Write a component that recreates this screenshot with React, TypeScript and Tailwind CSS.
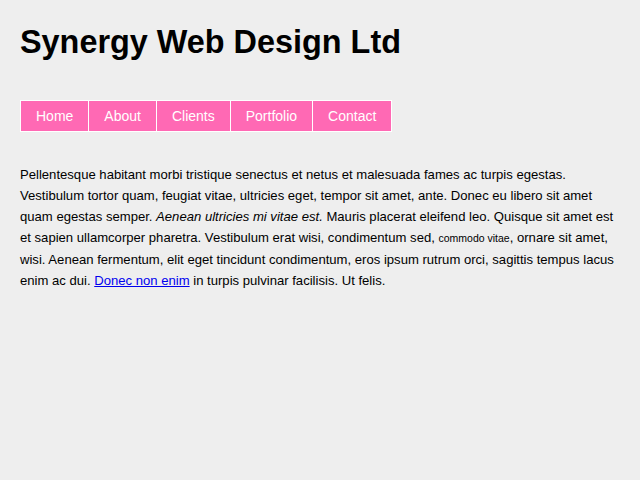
export default function App() {
    const links = ["Home", "About", "Clients", "Portfolio", "Contact"];

    return (
        <div className="min-h-[480px] bg-[#eeeeee] px-5 pt-6 font-['Liberation_Sans',Arial,sans-serif] text-black">
            <h1 className="text-[32.4px] font-bold leading-[36px]">Synergy Web Design Ltd</h1>

            <ul className="mt-10 flex w-fit border-y border-l border-white">
                {links.map((link) => (
                    <li key={link} className="border-r border-white bg-[#ff69b4]">
                        <a href="#" className="block px-[15px] text-[14px] leading-[30px] text-white">
                            {link}
                        </a>
                    </li>
                ))}
            </ul>

            <p className="mt-[32px] text-[13.1px] leading-[21px]">
                Pellentesque habitant morbi tristique senectus et netus et malesuada fames ac turpis egestas.
                Vestibulum tortor quam, feugiat vitae, ultricies eget, tempor sit amet, ante. Donec eu libero sit amet
                quam egestas semper. <em>Aenean ultricies mi vitae est.</em> Mauris placerat eleifend leo. Quisque sit
                amet est et sapien ullamcorper pharetra. Vestibulum erat wisi, condimentum sed,{" "}
                <code className="font-['Liberation_Sans',Arial,sans-serif] text-[10.5px]">commodo vitae</code>, ornare
                sit amet, wisi. Aenean fermentum, elit eget tincidunt condimentum, eros ipsum rutrum orci, sagittis
                tempus lacus enim ac dui.{" "}
                <a href="#" className="text-[#0000ee] underline">
                    Donec non enim
                </a>{" "}
                in turpis pulvinar facilisis. Ut felis.
            </p>
        </div>
    );
}
